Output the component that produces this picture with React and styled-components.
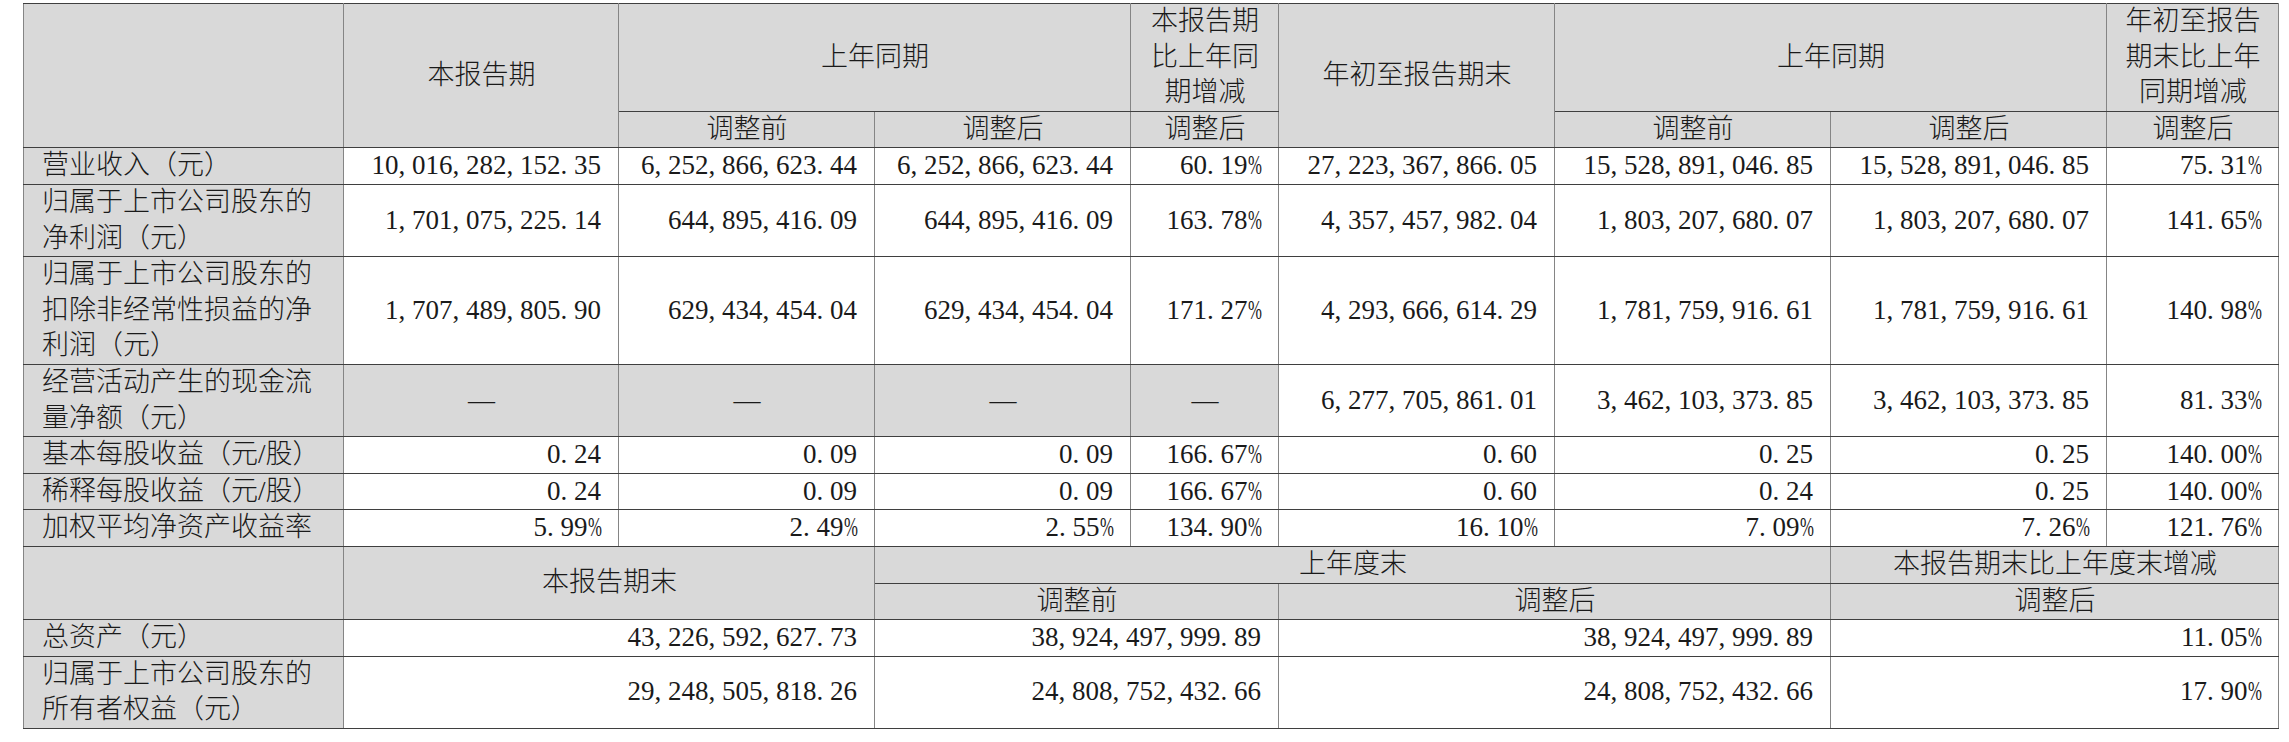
import React from "react";
import styled, { createGlobalStyle } from "styled-components";

const GlobalStyle = createGlobalStyle`
    body{
        margin: 0;
        background: #FFFFFF;
    }
`;

const widths = [320, 275, 256, 256, 148, 276, 276, 276, 172];

const periodRows = [
    { label: ["营业收入（元）"], values: ["10,016,282,152.35", "6,252,866,623.44", "6,252,866,623.44", "60.19%", "27,223,367,866.05", "15,528,891,046.85", "15,528,891,046.85", "75.31%"] },
    { label: ["归属于上市公司股东的", "净利润（元）"], values: ["1,701,075,225.14", "644,895,416.09", "644,895,416.09", "163.78%", "4,357,457,982.04", "1,803,207,680.07", "1,803,207,680.07", "141.65%"] },
    { label: ["归属于上市公司股东的", "扣除非经常性损益的净", "利润（元）"], values: ["1,707,489,805.90", "629,434,454.04", "629,434,454.04", "171.27%", "4,293,666,614.29", "1,781,759,916.61", "1,781,759,916.61", "140.98%"] },
    { label: ["经营活动产生的现金流", "量净额（元）"], values: ["—", "—", "—", "—", "6,277,705,861.01", "3,462,103,373.85", "3,462,103,373.85", "81.33%"] },
    { label: ["基本每股收益（元/股）"], values: ["0.24", "0.09", "0.09", "166.67%", "0.60", "0.25", "0.25", "140.00%"] },
    { label: ["稀释每股收益（元/股）"], values: ["0.24", "0.09", "0.09", "166.67%", "0.60", "0.24", "0.25", "140.00%"] },
    { label: ["加权平均净资产收益率"], values: ["5.99%", "2.49%", "2.55%", "134.90%", "16.10%", "7.09%", "7.26%", "121.76%"] },
];

const balanceRows = [
    { label: ["总资产（元）"], values: ["43,226,592,627.73", "38,924,497,999.89", "38,924,497,999.89", "11.05%"] },
    { label: ["归属于上市公司股东的", "所有者权益（元）"], values: ["29,248,505,818.26", "24,808,752,432.66", "24,808,752,432.66", "17.90%"] },
];

// halfwidth punctuation gets the same cell width as a digit, like the PDF's SimSun
function Num({ v }) {
    return (
        <>
            {v.split(/([,.%])/).filter(Boolean).map((part, i) =>
                /[,.%]/.test(part)
                    ? <Narrow key={i} $pct={part === "%"}>{part}</Narrow>
                    : part
            )}
        </>
    );
}

function Lines({ lines }) {
    return lines.map((l, i) => (
        <React.Fragment key={i}>
            {i > 0 && <br />}
            {l}
        </React.Fragment>
    ));
}

export default function App() {
    return (
        <Page>
            <GlobalStyle />
            <Sheet>
                <colgroup>
                    {widths.map((w, i) => <col key={i} style={{ width: w }} />)}
                </colgroup>
                <tbody>
                    <tr>
                        <Cell $head rowSpan={2}></Cell>
                        <Cell $head $align="center" rowSpan={2}>本报告期</Cell>
                        <Cell $head $align="center" colSpan={2}>上年同期</Cell>
                        <Cell $head $align="center"><Lines lines={["本报告期", "比上年同", "期增减"]} /></Cell>
                        <Cell $head $align="center" rowSpan={2}>年初至报告期末</Cell>
                        <Cell $head $align="center" colSpan={2}>上年同期</Cell>
                        <Cell $head $align="center"><Lines lines={["年初至报告", "期末比上年", "同期增减"]} /></Cell>
                    </tr>
                    <tr>
                        <Cell $head $align="center">调整前</Cell>
                        <Cell $head $align="center">调整后</Cell>
                        <Cell $head $align="center">调整后</Cell>
                        <Cell $head $align="center">调整前</Cell>
                        <Cell $head $align="center">调整后</Cell>
                        <Cell $head $align="center">调整后</Cell>
                    </tr>
                    {periodRows.map((row, r) => (
                        <tr key={r}>
                            <Cell $head><Lines lines={row.label} /></Cell>
                            {row.values.map((v, c) =>
                                v === "—"
                                    ? <Cell key={c} $head $align="center">—</Cell>
                                    : <Cell key={c} $align="right"><Num v={v} /></Cell>
                            )}
                        </tr>
                    ))}
                    <tr>
                        <Cell $head rowSpan={2}></Cell>
                        <Cell $head $align="center" colSpan={2} rowSpan={2}>本报告期末</Cell>
                        <Cell $head $align="center" colSpan={4}>上年度末</Cell>
                        <Cell $head $align="center" colSpan={2}>本报告期末比上年度末增减</Cell>
                    </tr>
                    <tr>
                        <Cell $head $align="center" colSpan={2}>调整前</Cell>
                        <Cell $head $align="center" colSpan={2}>调整后</Cell>
                        <Cell $head $align="center" colSpan={2}>调整后</Cell>
                    </tr>
                    {balanceRows.map((row, r) => (
                        <tr key={r}>
                            <Cell $head><Lines lines={row.label} /></Cell>
                            {row.values.map((v, c) => (
                                <Cell key={c} $align="right" colSpan={2}><Num v={v} /></Cell>
                            ))}
                        </tr>
                    ))}
                </tbody>
            </Sheet>
        </Page>
    );
}

const Page = styled.div`
    padding: 3px 10px 0 23px;
`;

const Sheet = styled.table`
    width: 2256px;
    table-layout: fixed;
    border-collapse: collapse;
    font-family: "Liberation Serif", "Noto Sans CJK SC", serif;
    font-size: 27px;
    font-weight: 300;
    color: #1A1A1A;
`;

const Cell = styled.td`
    height: 35px;
    padding: 0 17px 0 18px;
    line-height: 35.6px;
    vertical-align: middle;
    white-space: nowrap;
    overflow: hidden;
    text-align: ${(p) => p.$align || "left"};
    background: ${(p) => (p.$head ? "#D9D9D9" : "#FFFFFF")};
    border-top: 1px solid #3F3F3F;
    border-bottom: 1px solid #3F3F3F;
    border-left: 1px solid #858585;
    border-right: 1px solid #858585;
`;

const Narrow = styled.span`
    display: inline-block;
    width: 0.5em;
    text-align: left;
    ${(p) => p.$pct && `
        transform: scaleX(0.62);
        transform-origin: left center;
    `}
`;
